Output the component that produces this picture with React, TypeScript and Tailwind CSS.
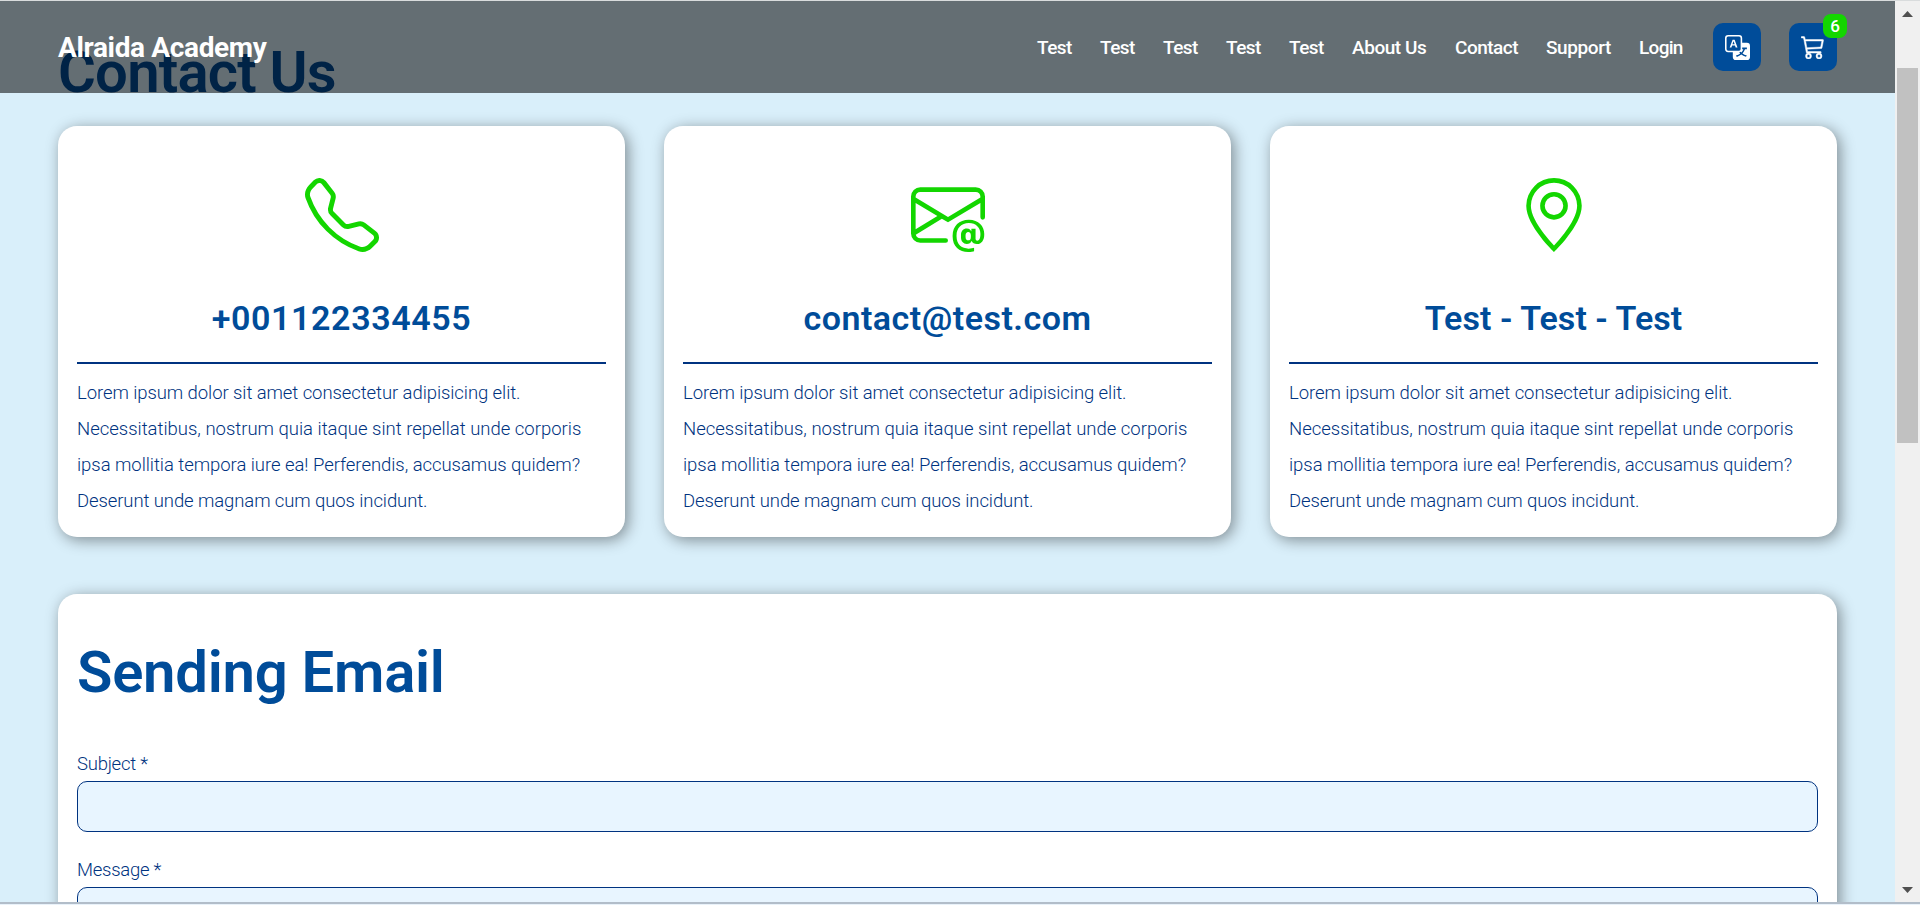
import type { ComponentType } from "react";
import { BsTelephone, BsEnvelopeAt, BsGeoAlt, BsTranslate, BsCart3 } from "react-icons/bs";

const navItems = [
  { label: "Test", cls: "w-[35px] tracking-[-0.55px]" },
  { label: "Test", cls: "w-[35px] tracking-[-0.55px]" },
  { label: "Test", cls: "w-[35px] tracking-[-0.55px]" },
  { label: "Test", cls: "w-[35px] tracking-[-0.55px]" },
  { label: "Test", cls: "w-[35px] tracking-[-0.55px]" },
  { label: "About Us", cls: "w-[75px] tracking-[-0.45px]" },
  { label: "Contact", cls: "w-[63px] tracking-[-0.5px]" },
  { label: "Support", cls: "w-[65px] tracking-[-0.4px]" },
  { label: "Login", cls: "w-[45px] tracking-[-0.7px]" },
];

const lines = [
  { text: "Lorem ipsum dolor sit amet consectetur adipisicing elit.", cls: "tracking-[-0.08px]" },
  { text: "Necessitatibus, nostrum quia itaque sint repellat unde corporis", cls: "tracking-[-0.01px]" },
  { text: "ipsa mollitia tempora iure ea! Perferendis, accusamus quidem?", cls: "tracking-[-0.05px]" },
  { text: "Deserunt unde magnam cum quos incidunt.", cls: "tracking-[-0.1px]" },
];

type CardProps = {
  Icon: ComponentType<{ className?: string }>;
  title: string;
  titleClass: string;
};

const cards: CardProps[] = [
  { Icon: BsTelephone, title: "+001122334455", titleClass: "tracking-[0.6px]" },
  { Icon: BsEnvelopeAt, title: "contact@test.com", titleClass: "tracking-[0.5px]" },
  { Icon: BsGeoAlt, title: "Test - Test - Test", titleClass: "tracking-[0.05px]" },
];

function Header() {
  return (
    <header className="absolute inset-x-0 top-0 z-10 flex h-[92px] items-center justify-between bg-black/54 px-[58px] text-white">
      <a className="mt-0.5 whitespace-nowrap text-[28px] font-bold leading-8 tracking-[-0.35px]">Alraida Academy</a>
      <nav className="flex items-center gap-7">
        {navItems.map((item, i) => (
          <a key={i} className={`-ml-px mr-px mt-px whitespace-nowrap text-[19px] font-medium leading-6 ${item.cls}`}>
            {item.label}
          </a>
        ))}
        <button className="flex size-12 items-center justify-center rounded-[10px] bg-[#004c99]">
          <BsTranslate className="size-[25px]" />
        </button>
        <button className="relative flex size-12 items-center justify-center rounded-[10px] bg-[#004c99]">
          <BsCart3 className="size-6 [stroke-width:0.3]" />
          <span className="absolute -right-2.5 -top-[9px] flex size-6 items-center justify-center rounded-lg bg-[#13d600] text-[17px] font-medium leading-none">
            6
          </span>
        </button>
      </nav>
    </header>
  );
}

function ContactCard({ Icon, title, titleClass }: CardProps) {
  return (
    <article className="flex h-[411px] flex-col items-center rounded-[19px] bg-white px-[19px] pt-[52px] shadow-[3px_3px_15px_rgba(0,0,0,0.42)]">
      <Icon className="size-[74px] text-[#13d600]" />
      <h2 className={`mt-12 whitespace-nowrap text-[34px] font-semibold leading-9 text-[#004c99] ${titleClass}`}>{title}</h2>
      <div className="mt-[26px] h-0.5 w-full shrink-0 bg-[#003380]" />
      <p className="mt-[11px] w-full whitespace-nowrap text-[18.5px] font-light leading-9 text-[#003380]">
        {lines.map((line) => (
          <span key={line.text} className={`block ${line.cls}`}>
            {line.text}
          </span>
        ))}
      </p>
    </article>
  );
}

function EmailForm() {
  const label = "block text-[18.5px] font-light leading-6 tracking-[-0.25px] text-[#003380]";
  const field = "block w-full resize-none rounded-[10px] border border-[#003380] bg-[#e8f5ff]";
  return (
    <form className="mt-[57px] h-[500px] rounded-[19px] bg-white px-[19px] pt-[46px] shadow-[3px_3px_15px_rgba(0,0,0,0.42)]">
      <h1 className="text-[58px] font-semibold leading-[64px] tracking-[-0.25px] text-[#004c99]">Sending Email</h1>
      <label className={`mt-12 ${label}`}>Subject *</label>
      <input className={`mt-[5px] h-[51px] ${field}`} />
      <label className={`mt-[26px] ${label}`}>Message *</label>
      <textarea className={`mt-[5px] h-[150px] ${field}`} />
    </form>
  );
}

function Scrollbar() {
  return (
    <aside className="flex w-[25px] shrink-0 flex-col items-center bg-[#f0f0f0]">
      <svg className="mt-2.5 h-1.5 w-[11px] shrink-0" viewBox="0 0 11 6">
        <path d="M0 6 5.5 0 11 6z" fill="#505050" />
      </svg>
      <div className="mt-[51px] h-[375px] w-[21px] bg-[#c1c1c1]" />
      <svg className="mb-[9px] mt-auto h-1.5 w-[11px] shrink-0" viewBox="0 0 11 6">
        <path d="M0 0 5.5 6 11 0z" fill="#505050" />
      </svg>
    </aside>
  );
}

export default function App() {
  return (
    <div className="flex h-[905px] w-[1920px] flex-col overflow-hidden bg-[#e9f2fa] font-['Roboto',sans-serif]">
      <div className="h-px shrink-0 bg-[#d9dcdd]" />
      <div className="flex h-[901px] shrink-0">
        <main className="relative w-[1895px] overflow-hidden bg-[#d9effa] px-[58px] pt-[39px]">
          <Header />
          <h1 className="text-[58px] font-semibold leading-[64px] tracking-[-0.8px] text-[#004c99]">Contact Us</h1>
          <section className="mt-[22px] grid grid-cols-3 gap-[39px]">
            {cards.map((card) => (
              <ContactCard key={card.title} {...card} />
            ))}
          </section>
          <EmailForm />
        </main>
        <Scrollbar />
      </div>
      <div className="h-0.5 shrink-0 bg-[#b2bdc9]" />
    </div>
  );
}
